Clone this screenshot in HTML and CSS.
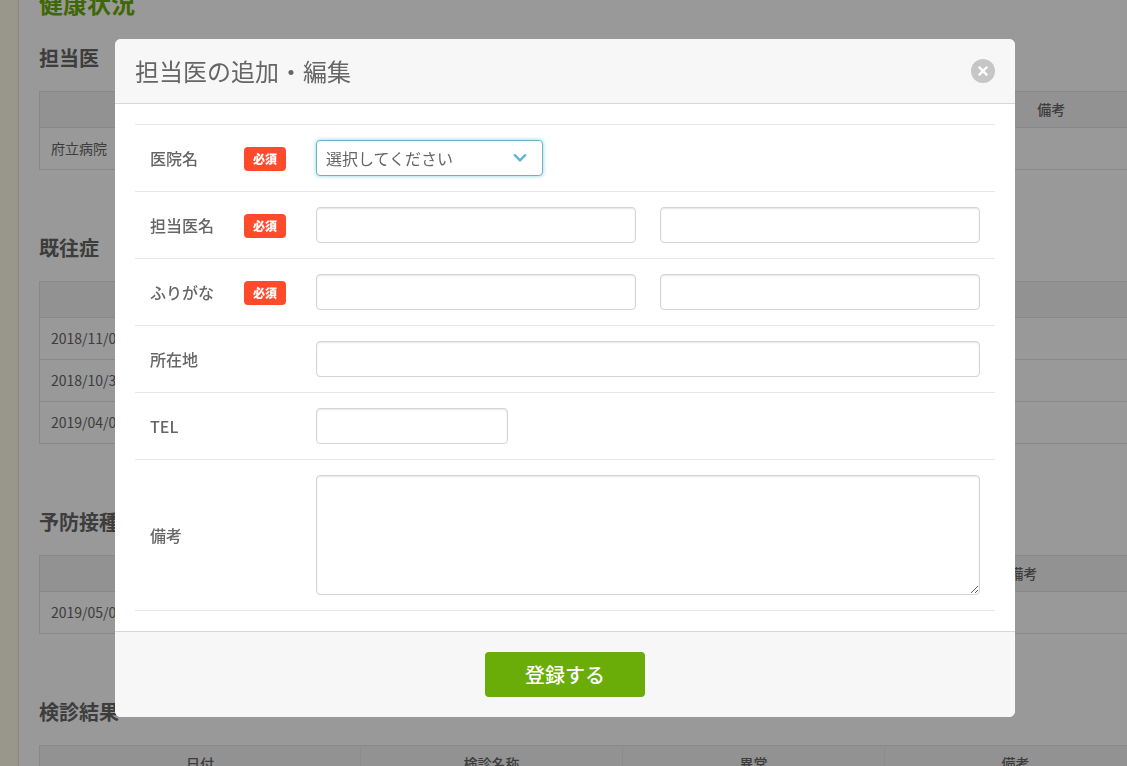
FILE: index.html
```html
<!DOCTYPE html>
<html lang="ja">
<head>
<meta charset="utf-8">
<meta name="viewport" content="width=device-width, initial-scale=1">
<title>健康状況</title>
<link rel="stylesheet" href="styles.css">
</head>
<body>
<main class="page">
  <h1 class="page-title">健康状況</h1>

  <section class="record">
    <h2 class="record-title">担当医</h2>
    <table class="records">
      <colgroup><col><col class="col-note-small"></colgroup>
      <thead><tr><th></th><th>備考</th></tr></thead>
      <tbody><tr><td>府立病院</td><td></td></tr></tbody>
    </table>
  </section>

  <section class="record">
    <h2 class="record-title">既往症</h2>
    <table class="records">
      <thead><tr><th></th></tr></thead>
      <tbody>
        <tr><td>2018/11/01</td></tr>
        <tr><td>2018/10/31</td></tr>
        <tr><td>2019/04/01</td></tr>
      </tbody>
    </table>
  </section>

  <section class="record">
    <h2 class="record-title">予防接種</h2>
    <table class="records">
      <colgroup><col><col class="col-note"></colgroup>
      <thead><tr><th></th><th>備考</th></tr></thead>
      <tbody><tr><td>2019/05/01</td><td></td></tr></tbody>
    </table>
  </section>

  <section class="record">
    <h2 class="record-title">検診結果</h2>
    <table class="records records-lined">
      <colgroup><col class="col-date"><col><col><col></colgroup>
      <thead><tr><th>日付</th><th>検診名称</th><th>異常</th><th>備考</th></tr></thead>
    </table>
  </section>
</main>

<div class="overlay">
  <form class="modal" role="dialog" aria-modal="true" aria-labelledby="modal-title">
    <header class="modal-header">
      <h2 class="modal-title" id="modal-title">担当医の追加・編集</h2>
      <button class="close" type="button" aria-label="閉じる">
        <svg viewBox="0 0 24 24" width="24" height="24" aria-hidden="true">
          <circle cx="12" cy="12" r="12" fill="#c6c6c6"/>
          <path d="M8.4 8.4l7.2 7.2M15.6 8.4l-7.2 7.2" stroke="#fff" stroke-width="2.4" stroke-linecap="round"/>
        </svg>
      </button>
    </header>

    <div class="modal-body">
      <div class="field">
        <label class="field-label" for="hospital">医院名</label>
        <span class="badge">必須</span>
        <div class="field-control">
          <div class="select-box">
            <select class="control select" id="hospital">
              <option>選択してください</option>
            </select>
            <svg class="chevron" viewBox="0 0 14 10" width="14" height="10" aria-hidden="true">
              <path d="M1.800 2.200L7 7.400l5.200-5.200" fill="none" stroke="#62b4cf" stroke-width="2.400" stroke-linecap="round"/>
            </svg>
          </div>
        </div>
      </div>
      <div class="field">
        <label class="field-label" for="name">担当医名</label>
        <span class="badge">必須</span>
        <div class="field-control">
          <input class="control" type="text" id="name">
          <input class="control" type="text" aria-label="担当医名（名）">
        </div>
      </div>
      <div class="field">
        <label class="field-label" for="kana">ふりがな</label>
        <span class="badge">必須</span>
        <div class="field-control">
          <input class="control" type="text" id="kana">
          <input class="control" type="text" aria-label="ふりがな（名）">
        </div>
      </div>
      <div class="field">
        <label class="field-label" for="address">所在地</label>
        <div class="field-control">
          <input class="control" type="text" id="address">
        </div>
      </div>
      <div class="field">
        <label class="field-label" for="tel">TEL</label>
        <div class="field-control">
          <input class="control control-short" type="tel" id="tel">
        </div>
      </div>
      <div class="field">
        <label class="field-label" for="note">備考</label>
        <div class="field-control">
          <textarea class="control textarea" id="note"></textarea>
        </div>
      </div>
    </div>

    <footer class="modal-footer">
      <button class="submit" type="submit">登録する</button>
    </footer>
  </form>
</div>
</body>
</html>
```

FILE: styles.css
```css
* {
  box-sizing: border-box;
}

body {
  margin: 0;
  height: 100vh;
  overflow: hidden;
  background: #fffaea;
  color: #666;
  font-family: "Noto Sans CJK JP", sans-serif;
  font-size: 16px;
}

h1,
h2 {
  margin: 0;
}

.page {
  margin: -15px -20px 0 18px;
  padding-left: 20px;
  border-left: 1px solid #e6dcc8;
  background: #fff;
}

.page-title {
  margin-bottom: 22px;
  color: #6aad08;
  font-size: 24px;
  line-height: 36px;
}

.record {
  margin-bottom: 63px;
}

.record-title {
  margin-bottom: 18px;
  font-size: 20px;
  line-height: 30px;
}

.records {
  width: 100%;
  table-layout: fixed;
  border-collapse: collapse;
  border: 1px solid #e3e3e3;
  font-size: 14px;
  line-height: 21px;
}

.records th {
  height: 36px;
  padding: 0;
  background: #f4f4f4;
  border-bottom: 1px solid #e3e3e3;
  font-weight: 500;
}

.records td {
  height: 42px;
  padding: 0 11px;
  border-bottom: 1px solid #e3e3e3;
}

.records-lined th {
  border-right: 1px solid #e9e9e9;
}

.col-note-small {
  width: 190px;
}

.col-note {
  width: 246px;
}

.col-date {
  width: 29%;
}

.overlay {
  position: fixed;
  inset: 0;
  padding: 39px 0 39px 3px;
  overflow: auto;
  background: rgba(0, 0, 0, 0.4);
}

.modal {
  max-width: 900px;
  margin: 0 auto;
  border-radius: 6px;
  overflow: hidden;
  background: #fff;
}

.modal-header {
  display: flex;
  align-items: center;
  justify-content: space-between;
  padding: 14px 20px;
  border-bottom: 1px solid #d8d8d8;
  background: #f7f7f7;
}

.modal-title {
  font-size: 24px;
  font-weight: 400;
  line-height: 36px;
}

.close {
  padding: 0;
  border: 0;
  background: none;
  cursor: pointer;
}

.close svg {
  display: block;
}

.modal-body {
  padding: 20px;
}

.field {
  display: grid;
  grid-template-columns: 94px 42px 1fr;
  align-items: center;
  padding: 15px;
  border-top: 1px solid #e8e8e8;
}

.field:last-child {
  border-bottom: 1px solid #e8e8e8;
}

.field-label {
  font-weight: 500;
  line-height: 24px;
}

.badge {
  margin-top: 2px;
  border-radius: 4px;
  background: #ff4a2b;
  color: #fff;
  font-size: 12px;
  font-weight: 900;
  line-height: 24px;
  text-align: center;
}

.field-control {
  display: flex;
  grid-column: 3;
  gap: 24px;
  padding-left: 30px;
}

.control {
  flex: 1;
  min-width: 0;
  height: 36px;
  padding: 0 9px;
  border: 1px solid #d4d4d4;
  border-radius: 4px;
  background: #fff;
  box-shadow: inset 0 1px 2px rgba(0, 0, 0, 0.1);
  color: #666;
  font: inherit;
}

.control-short {
  flex: 0 1 192px;
}

.textarea {
  display: block;
  height: 120px;
  padding: 8px;
  resize: both;
}

.select-box {
  position: relative;
  flex: 0 1 227px;
}

.select {
  display: block;
  width: 100%;
  appearance: none;
  border-color: #6ab3c8;
  box-shadow: 0 0 4px rgba(91, 192, 222, 0.7);
}

.chevron {
  position: absolute;
  top: 13px;
  right: 16px;
  pointer-events: none;
}

.modal-footer {
  display: flex;
  justify-content: center;
  padding: 20px;
  border-top: 1px solid #d8d8d8;
  background: #f7f7f7;
}

.submit {
  width: 160px;
  height: 45px;
  padding: 0;
  border: 0;
  border-radius: 4px;
  background: #6aad08;
  color: #fff;
  font: inherit;
  font-size: 20px;
  font-weight: 500;
  cursor: pointer;
}
```
